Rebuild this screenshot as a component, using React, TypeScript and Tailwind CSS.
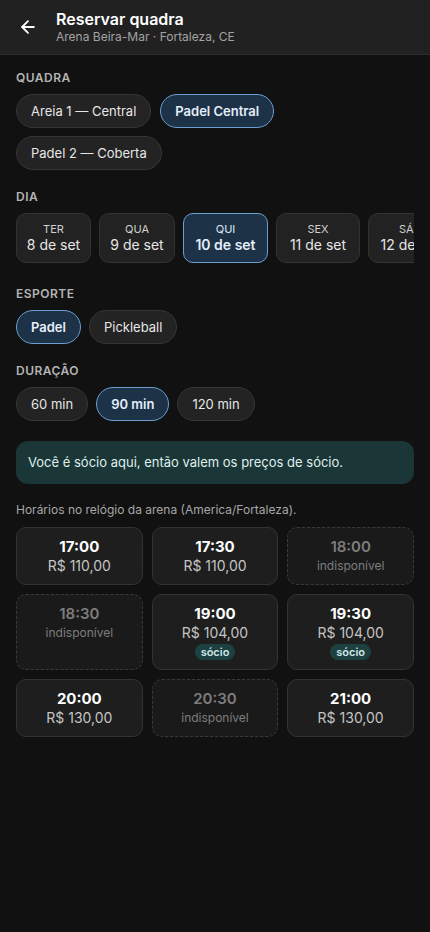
import { ArrowLeft } from "lucide-react";

const courts = [
  { id: "a1", label: "Areia 1 — Central" },
  { id: "pc", label: "Padel Central" },
  { id: "p2", label: "Padel 2 — Coberta" },
];

const days = [
  { wd: "TER", date: "8 de set", w: "w-[75px]" },
  { wd: "QUA", date: "9 de set", w: "w-[76px]" },
  { wd: "QUI", date: "10 de set", w: "w-[85px]" },
  { wd: "SEX", date: "11 de set", w: "w-[84px]" },
  { wd: "SÁB", date: "12 de set", w: "w-[84px]" },
  { wd: "DOM", date: "13 de set", w: "w-[84px]" },
];

const sports = ["Padel", "Pickleball"];
const durations = ["60 min", "90 min", "120 min"];

type Slot = { time: string; price?: string; member?: boolean };

const slots: Slot[] = [
  { time: "17:00", price: "R$ 110,00" },
  { time: "17:30", price: "R$ 110,00" },
  { time: "18:00" },
  { time: "18:30" },
  { time: "19:00", price: "R$ 104,00", member: true },
  { time: "19:30", price: "R$ 104,00", member: true },
  { time: "20:00", price: "R$ 130,00" },
  { time: "20:30" },
  { time: "21:00", price: "R$ 130,00" },
];

const chipBase = "h-[34px] rounded-full border px-[14px] text-[13px] leading-none flex items-center";
const chipOff = "border-[#363636] bg-[#232323] text-[#e6e6e6]";
const chipOn = "border-[#6a9fd0] bg-[#1e3247] text-[#e3eefa] font-semibold";

function Label({ children }: { children: string }) {
  return (
    <p className="text-[12px] font-semibold uppercase leading-[16px] tracking-[0.04em] text-[#b4b4b4]">{children}</p>
  );
}

export default function App() {
  return (
    <div
      className="min-h-[932px] w-[430px] bg-[#111111] text-white"
      style={{ fontFamily: "Inter, 'Noto Sans', sans-serif" }}
    >
      <header className="flex h-[55px] items-center gap-[18px] border-b border-[#2c2c2c] bg-[#212121] px-[18px]">
        <ArrowLeft className="h-[20px] w-[20px] text-white" strokeWidth={2.2} />
        <div className="flex flex-col">
          <h1 className="text-[16px] font-semibold leading-[20px] text-white">Reservar quadra</h1>
          <p className="text-[12px] leading-[16px] text-[#a3a3a3]">Arena Beira-Mar · Fortaleza, CE</p>
        </div>
      </header>

      <main className="px-4 pt-[15px]">
        <Label>Quadra</Label>
        <div className="mt-[8px] flex flex-wrap gap-x-[9px] gap-y-[8px]">
          {courts.map((c) => (
            <button key={c.id} className={`${chipBase} ${c.id === "pc" ? chipOn : chipOff}`}>
              {c.label}
            </button>
          ))}
        </div>

        <div className="mt-[19px]">
          <Label>Dia</Label>
        </div>
        <div className="mt-[8px] flex gap-[8px] overflow-hidden">
          {days.map((d) => {
            const on = d.wd === "QUI";
            return (
              <div
                key={d.wd}
                className={`flex h-[50px] shrink-0 flex-col items-center justify-center rounded-[10px] border ${d.w} ${
                  on ? "border-[#6a9fd0] bg-[#1e3247]" : "border-[#333333] bg-[#222222]"
                }`}
              >
                <span className={`text-[11px] leading-[14px] ${on ? "text-[#dbe8f5]" : "text-[#d0d0d0]"}`}>{d.wd}</span>
                <span
                  className={`whitespace-nowrap text-[14px] leading-[18px] ${
                    on ? "font-semibold text-[#e3eefa]" : "text-[#e6e6e6]"
                  }`}
                >
                  {d.date}
                </span>
              </div>
            );
          })}
        </div>

        <div className="mt-[23px]">
          <Label>Esporte</Label>
        </div>
        <div className="mt-[8px] flex gap-[8px]">
          {sports.map((s) => (
            <button key={s} className={`${chipBase} ${s === "Padel" ? chipOn : chipOff}`}>
              {s}
            </button>
          ))}
        </div>

        <div className="mt-[19px]">
          <Label>Duração</Label>
        </div>
        <div className="mt-[8px] flex gap-[8px]">
          {durations.map((d) => (
            <button key={d} className={`${chipBase} ${d === "90 min" ? chipOn : chipOff}`}>
              {d}
            </button>
          ))}
        </div>

        <div className="mt-[20px] flex h-[43px] items-center rounded-[12px] bg-[#1b3636] px-[12px] text-[13px] text-[#dfeeee]">
          Você é sócio aqui, então valem os preços de sócio.
        </div>

        <p className="mt-[18px] text-[12px] leading-[16px] text-[#a6a6a6]">
          Horários no relógio da arena (America/Fortaleza).
        </p>

        <div className="mt-[9px] grid grid-cols-3 gap-[9px]">
          {slots.map((s) =>
            s.price ? (
              <div
                key={s.time}
                className="flex min-h-[58px] flex-col items-center rounded-[10px] border border-[#333333] bg-[#1e1e1e] pt-[10px] pb-[9px]"
              >
                <span className="text-[15px] font-bold leading-[18px] text-white">{s.time}</span>
                <span className="text-[14px] leading-[19px] text-[#c4c4c4]">{s.price}</span>
                {s.member && (
                  <span className="mt-[2px] rounded-full bg-[#1d4041] px-[6px] text-[11px] font-semibold leading-[16px] text-[#cfe6e6]">
                    sócio
                  </span>
                )}
              </div>
            ) : (
              <div
                key={s.time}
                className="flex min-h-[58px] flex-col items-center rounded-[10px] border border-dashed border-[#3a3a3a] bg-[#1a1a1a] pt-[10px] pb-[9px]"
              >
                <span className="text-[15px] font-semibold leading-[18px] text-[#7d7d7d]">{s.time}</span>
                <span className="text-[12px] leading-[19px] text-[#7d7d7d]">indisponível</span>
              </div>
            )
          )}
        </div>
      </main>
    </div>
  );
}
